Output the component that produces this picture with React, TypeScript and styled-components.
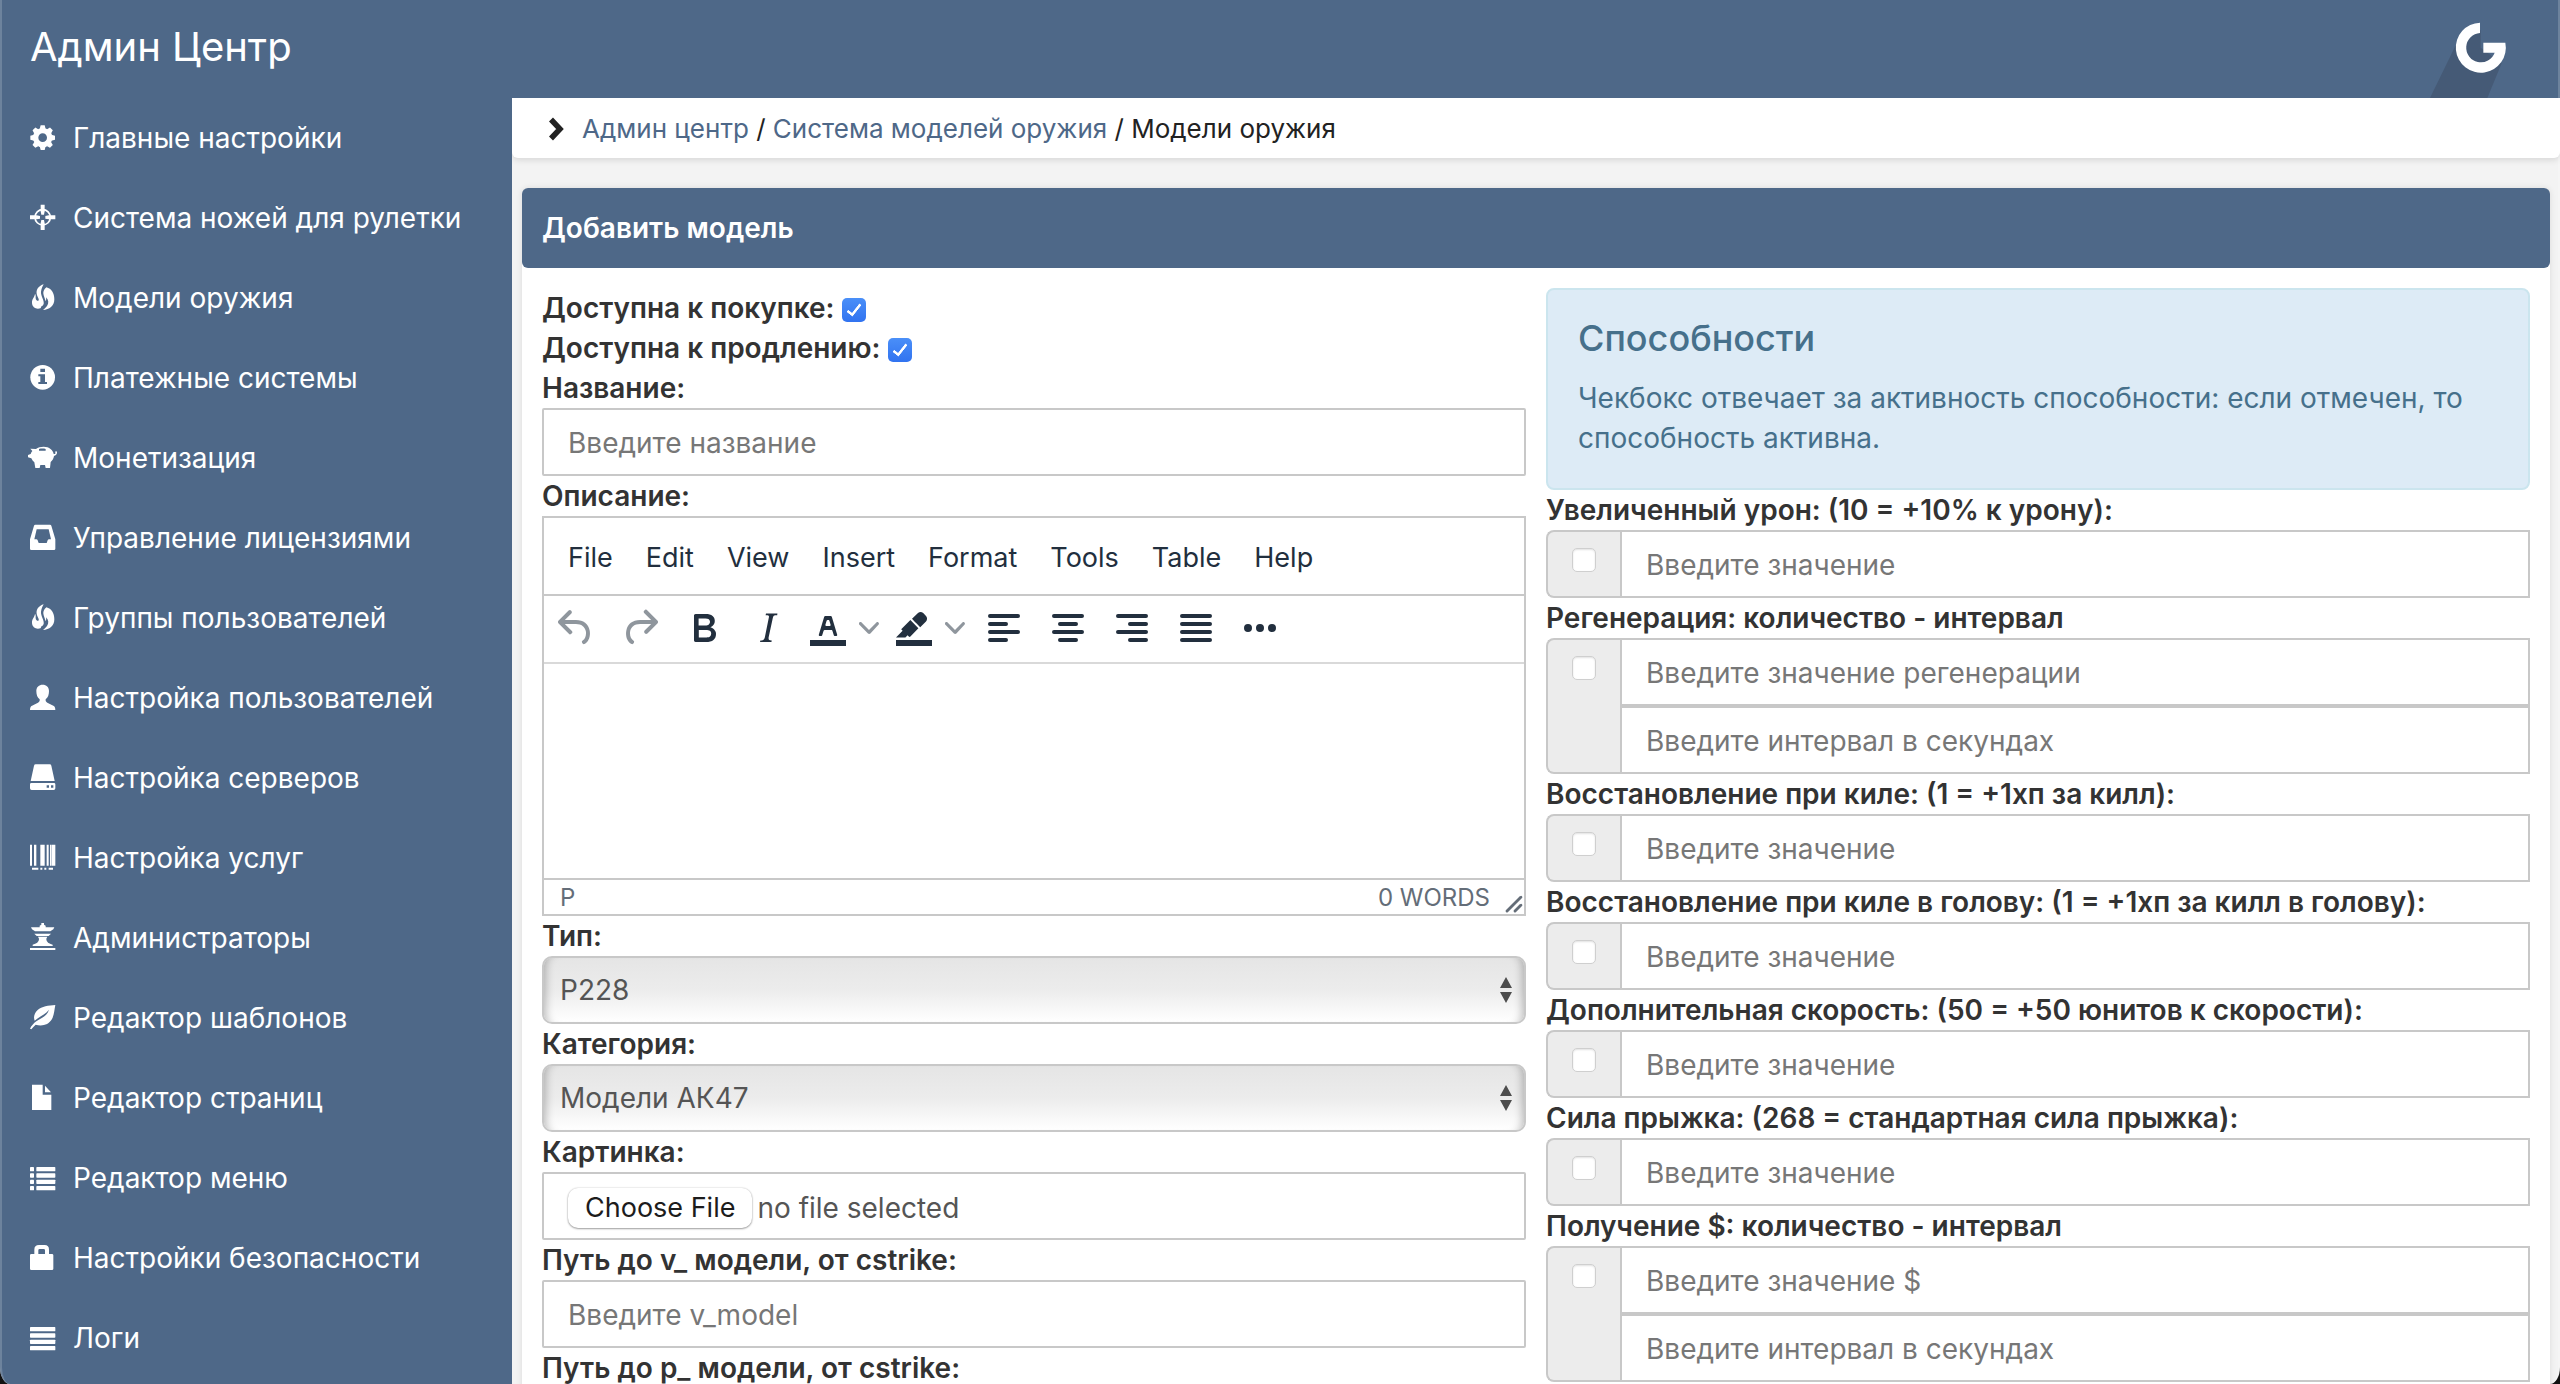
import React from "react";
import styled, { createGlobalStyle } from "styled-components";

const colors = {
  brand: "#4e6888",
  brandDark: "#455a76",
  text: "#333333",
  field: "#555555",
  muted: "#777777",
  border: "#c8c8c8",
  page: "#f3f3f3",
  editor: "#222f3e",
  info: "#46708b",
};

const GlobalStyle = createGlobalStyle`
  *, *::before, *::after { box-sizing: border-box; }
  html, body { margin: 0; height: 100%; background: #111111; }
  #root { height: 100%; }
  body, input, select, button {
    font-family: Inter, "Liberation Sans", sans-serif;
    font-size: 28px;
    line-height: 40px;
  }
`;

/* ---------- shell ---------- */

const Window = styled.div`
  position: relative;
  display: flex;
  flex-direction: column;
  height: 100vh;
  overflow: hidden;
  border-radius: 0 0 10px 10px / 0 0 17px 17px;
  background: ${colors.page};
  color: ${colors.text};

  &::after {
    content: "";
    position: absolute;
    inset: 0;
    border: solid rgba(255, 255, 255, 0.18);
    border-width: 0 2px;
    border-radius: inherit;
    pointer-events: none;
  }
`;

const Header = styled.header`
  flex: none;
  display: flex;
  align-items: stretch;
  justify-content: space-between;
  height: 98px;
  padding: 0 42px 0 30px;
  background: ${colors.brand};
`;

const Brand = styled.a`
  padding: 24px 0;
  color: #ffffff;
  font-size: 40px;
  line-height: 46px;
  text-decoration: none;
`;

const LogoLink = styled.a`
  display: block;

  svg {
    display: block;
    width: 90px;
    height: 98px;
  }
`;

const Columns = styled.div`
  flex: 1;
  min-height: 0;
  display: grid;
  grid-template-columns: 512px minmax(0, 1fr);
`;

const Sidebar = styled.nav`
  overflow: hidden;
  background: ${colors.brand};
`;

const SideLink = styled.a`
  display: flex;
  align-items: center;
  gap: 15px;
  height: 80px;
  padding-left: 30px;
  color: #ffffff;
  text-decoration: none;
  white-space: nowrap;

  svg {
    flex: none;
    width: 28px;
    height: 28px;
    overflow: visible;
    fill: currentColor;
  }
`;

const Main = styled.main`
  overflow-y: auto;
  scrollbar-width: none;
`;

const Breadcrumbs = styled.nav`
  display: flex;
  align-items: center;
  height: 60px;
  padding: 2px 0 0 34px;
  border-radius: 0 0 6px 6px;
  background: #ffffff;
  box-shadow: 0 2px 6px rgba(0, 0, 0, 0.12);
  color: #222222;
  font-size: 26px;
  white-space: pre;

  svg {
    width: 18px;
    height: 24px;
    margin-right: 18px;
  }

  a {
    color: ${colors.brand};
    text-decoration: none;
  }
`;

const Card = styled.section`
  margin: 30px 10px;
  border-radius: 6px;
  background: #ffffff;
  box-shadow: 0 0 6px rgba(0, 0, 0, 0.1);
`;

const CardTitle = styled.h1`
  margin: 0;
  padding: 20px;
  border-radius: 6px;
  background: ${colors.brand};
  color: #ffffff;
  font-size: 28px;
  font-weight: 600;
  line-height: 40px;
`;

const Form = styled.form`
  display: grid;
  grid-template-columns: repeat(2, minmax(0, 1fr));
  align-items: start;
  gap: 20px;
  padding: 20px;
`;

const Column = styled.div`
  display: flex;
  flex-direction: column;
`;

/* ---------- fields ---------- */

const Label = styled.label`
  display: block;
  font-weight: 600;
  line-height: 40px;
  white-space: nowrap;
`;

const Checkbox = styled.input.attrs({ type: "checkbox" })`
  appearance: none;
  flex: none;
  display: grid;
  place-items: center;
  width: 24px;
  height: 24px;
  margin: 0;
  border: 1px solid #cfcfcf;
  border-radius: 5px;
  background: #ffffff;
  box-shadow: inset 0 1px 2px rgba(0, 0, 0, 0.12);

  &:checked {
    border: 0;
    background: linear-gradient(#4a8ff8, #3173f0);
    box-shadow: none;
  }

  &:checked::after {
    content: "";
    width: 8px;
    height: 15px;
    margin-bottom: 4px;
    border: solid #ffffff;
    border-width: 0 3px 3px 0;
    border-radius: 1px;
    transform: rotate(38deg);
  }
`;

const CheckRow = styled.div`
  display: flex;
  align-items: flex-start;
  gap: 8px;
  height: 40px;

  ${Checkbox} {
    margin-top: 10px;
  }
`;

const TextInput = styled.input`
  display: block;
  width: 100%;
  height: 68px;
  padding: 2px 24px 0;
  border: 2px solid ${colors.border};
  border-radius: 2px;
  outline: 0;
  background: #ffffff;
  color: ${colors.field};

  &::placeholder {
    color: ${colors.muted};
    opacity: 1;
  }
`;

const SelectBox = styled.div`
  display: grid;
  align-items: center;

  & > * {
    grid-area: 1 / 1;
  }

  svg {
    justify-self: end;
    width: 14px;
    height: 28px;
    margin-right: 13px;
    fill: #4d4d4d;
    pointer-events: none;
  }
`;

const Select = styled.select`
  appearance: none;
  width: 100%;
  height: 68px;
  padding: 0 16px;
  border: 2px solid ${colors.border};
  border-radius: 10px;
  background: linear-gradient(#e5e5e5, #ececec 50%, #ffffff);
  box-shadow:
    inset 10px 0 8px -8px rgba(0, 0, 0, 0.25),
    inset -10px 0 8px -8px rgba(0, 0, 0, 0.25);
  color: ${colors.field};
`;

const FileBox = styled.div`
  position: relative;
  display: flex;
  align-items: center;
  gap: 5px;
  height: 68px;
  padding: 4px 24px 0;
  border: 2px solid ${colors.border};
  border-radius: 2px;
  color: ${colors.field};

  input {
    position: absolute;
    inset: 0;
    width: 100%;
    opacity: 0;
  }
`;

const FileButton = styled.span`
  padding: 0 17px;
  border-radius: 10px;
  background: #ffffff;
  box-shadow: 0 1px 2px rgba(0, 0, 0, 0.35), 0 0 2px rgba(0, 0, 0, 0.2);
  color: #1c1c1c;
  font-size: 27px;
`;

const FileStatus = styled.span`
  font-size: 28px;
`;

const Alert = styled.div`
  padding: 28px 30px 30px;
  border: 2px solid #cbe5ee;
  border-radius: 8px;
  background: #ddebf6;
  color: ${colors.info};

  h2 {
    margin: 0 0 20px;
    font-size: 36px;
    font-weight: 500;
    line-height: 40px;
  }

  p {
    margin: 0;
  }
`;

const Group = styled.div`
  display: flex;
`;

const Addon = styled.div`
  flex: none;
  display: flex;
  justify-content: center;
  width: 74px;
  padding-top: 16px;
  border: 2px solid ${colors.border};
  border-right: 0;
  border-radius: 8px 0 0 8px;
  background: #ececec;
`;

const GroupInputs = styled.div`
  flex: 1;
  min-width: 0;

  ${TextInput} {
    border-radius: 0;
  }
`;

/* ---------- rich text editor ---------- */

const Editor = styled.div`
  border: 2px solid ${colors.border};
  color: ${colors.editor};
`;

const MenuBar = styled.div`
  display: flex;
  align-items: center;
  gap: 1px;
  height: 78px;
  padding: 4px 8px 0;
  border-bottom: 2px solid ${colors.border};
`;

const MenuButton = styled.button`
  padding: 0 16px;
  border: 0;
  background: none;
  color: inherit;
  font-size: 27px;
`;

const ToolBar = styled.div`
  display: flex;
  align-items: center;
  height: 68px;
  border-bottom: 2px solid #d9d9d9;
`;

const ToolButton = styled.button<{ $width?: number; $dim?: boolean }>`
  display: grid;
  place-items: center;
  width: ${(p) => p.$width ?? 64}px;
  height: 66px;
  padding: 0 0 2px;
  border: 0;
  background: none;
  color: inherit;
  opacity: ${(p) => (p.$dim ? 0.5 : 1)};

  svg {
    width: 48px;
    height: 48px;
    fill: currentColor;
  }
`;

const SplitButton = styled.div`
  display: flex;
  padding-right: 4px;

  ${ToolButton}:last-child svg {
    width: 20px;
    height: 20px;
  }
`;

const EditArea = styled.div`
  height: 214px;
  outline: 0;
`;

const StatusBar = styled.div`
  display: flex;
  align-items: center;
  height: 36px;
  padding: 2px 0 0 16px;
  border-top: 2px solid ${colors.border};
  color: #646d78;
  font-size: 24px;
  line-height: 32px;

  svg {
    align-self: flex-end;
    width: 20px;
    height: 20px;
    margin-left: 14px;
    fill: currentColor;
  }
`;

const WordCount = styled.span`
  margin-left: auto;
`;

/* ---------- icons ---------- */

const Glyph = ({ children }: { children: React.ReactNode }) => (
  <svg viewBox="0 0 84 84" aria-hidden="true">
    {children}
  </svg>
);

const rows4 = [9, 28, 47, 66];

const Cog = () => (
  <Glyph>
    <circle cx="38" cy="41" r="21" fill="none" stroke="currentColor" strokeWidth="16" />
    {[0, 45, 90, 135, 180, 225, 270, 315].map((a) => (
      <path key={a} d="M29 15L32 4H44L47 15Z" transform={`rotate(${a} 38 41)`} />
    ))}
  </Glyph>
);

const Screenshot = () => (
  <Glyph>
    <circle cx="38" cy="40" r="23" fill="none" stroke="currentColor" strokeWidth="5" />
    {[0, 90, 180, 270].map((a) => (
      <path key={a} d="M32 2H44V22L42 32H34L32 22Z" transform={`rotate(${a} 38 40)`} />
    ))}
  </Glyph>
);

const Fire = () => (
  <Glyph>
    <path d="M41 1C27 5 18 16 20 29C22 39 28 44 26 49C24 53 17 49 17 42C17 37 18 33 15 29C15 38 5 44 6 57C7 71 20 78 33 72C31 66 38 68 41 60C44 50 32 36 33 24C34 14 37 8 41 1Z" />
    <path d="M49 10C41 17 38 25 41 34C43 41 45 45 47 52C49 48 49 44 48 40C56 48 57 58 51 66C47 71 43 75 39 78C58 77 73 67 73 46C73 28 65 14 49 10Z" />
  </Glyph>
);

const Info = () => (
  <Glyph>
    <circle cx="38" cy="40" r="37" />
    <path fill={colors.brand} d="M31 14H45V24H31ZM25 31H45V54H51V60H25V54H31V37H25Z" />
  </Glyph>
);

const Piggy = () => (
  <Glyph>
    <path
      fillRule="evenodd"
      d="M1 14L18 15C24 10 32 8 41 8C58 8 69 18 71 30C75 31 77 29 76 26C75 23 77 21 79 22C83 24 82 34 72 36C71 44 67 50 62 54L60 72H47L45 63H31L29 72H16L13 55C9 52 6 48 4 43L-6 40V33L2 30C3 26 5 23 7 21ZM27 15V20H47V15C41 13 33 13 27 15Z"
    />
  </Glyph>
);

const Inbox = () => (
  <Glyph>
    <path
      fillRule="evenodd"
      d="M16 2H60Q63 2 64 5L76 46V74Q76 78 72 78H4Q0 78 0 74V46L12 5Q13 2 16 2ZM20 16L13 46H19Q22 46 23 49L26 57H50L53 49Q54 46 57 46H63L56 16Z"
    />
  </Glyph>
);

const User = () => (
  <Glyph>
    <path d="M38 2C27 2 19 9 19 21C19 32 22 41 29 46C30 50 28 54 24 56L6 65C2 67 0 70 0 78H76C76 70 74 67 70 65L52 56C48 54 46 50 47 46C54 41 57 32 57 21C57 9 49 2 38 2Z" />
  </Glyph>
);

const Hdd = () => (
  <Glyph>
    <path d="M17 1H59Q63 1 64 5L74 51H2L12 5Q13 1 17 1Z" />
    <path
      fillRule="evenodd"
      d="M4 57H72Q76 57 76 61V73Q76 78 71 78H5Q0 78 0 73V61Q0 57 4 57ZM50 64V71H57V64ZM63 64V71H70V64Z"
    />
  </Glyph>
);

const Barcode = () => (
  <Glyph>
    <path d="M0 2H6V65H0ZM12 2H19V65H12ZM31 2H44V65H31ZM50 2H56V65H50ZM60 2H63V65H60ZM64 2H76V65H64Z" />
    <path d="M6 71H25V77H6ZM31 71H37V77H31ZM43 71H49V77H43ZM56 71H69V77H56Z" />
  </Glyph>
);

const Pagoda = () => (
  <Glyph>
    <path d="M34 -3H42V2L47 5V10H73L70 16L61 22H15L6 16L3 10H29V5L34 2Z" />
    <path d="M13 29H63L56 36H20Z" />
    <path d="M24 38H52L49 44C49 54 57 59 68 62V66H8V62C19 59 27 54 27 44Z" />
    <path d="M0 72H76V78H0Z" />
  </Glyph>
);

const Leaf = () => (
  <Glyph>
    <path d="M76 3C56 4 35 7 23 18C12 28 10 41 14 50C27 38 44 33 57 17C51 36 33 43 19 52C11 58 4 66 0 74L4 76C8 71 12 66 17 62C35 68 56 63 66 45C73 32 73 17 76 3Z" />
  </Glyph>
);

const FileIcon = () => (
  <Glyph>
    <path d="M6 2H38V32H64V78H6ZM45 5L63 25H45Z" />
  </Glyph>
);

const ListIcon = () => (
  <Glyph>
    {rows4.map((y) => (
      <React.Fragment key={y}>
        <rect x="0" y={y} width="12" height="13" rx="2" />
        <rect x="19" y={y} width="57" height="13" rx="2" />
      </React.Fragment>
    ))}
  </Glyph>
);

const Lock = () => (
  <Glyph>
    <path
      fillRule="evenodd"
      d="M4 30H13V17Q13 3 27 3H44Q57 3 57 17V30H66Q70 30 70 34V74Q70 78 66 78H4Q0 78 0 74V34Q0 30 4 30ZM25 30H45V19Q45 15 41 15H29Q25 15 25 19Z"
    />
  </Glyph>
);

const Justify = () => (
  <Glyph>
    {rows4.map((y) => (
      <rect key={y} x="0" y={y} width="76" height="13" rx="2" />
    ))}
  </Glyph>
);

const Logo = () => (
  <svg viewBox="684 0 270 294" aria-hidden="true">
    <path fill={colors.brandDark} d="M770 130L690 294H862L905 190L842 143L842 90Z" />
    <path
      fill="#ffffff"
      d="M840 68A75 75 0 1 0 916 128H850V158H884A44 44 0 1 1 840 99Z"
    />
  </svg>
);

const Tool = ({ d, size = 24 }: { d: string; size?: number }) => (
  <svg viewBox={`0 0 ${size} ${size}`} aria-hidden="true">
    <path fillRule="evenodd" d={d} />
  </svg>
);

const bar = (x: number, y: number, w: number) =>
  `M${x + 1} ${y}h${w - 2}a1 1 0 0 1 0 2h-${w - 2}a1 1 0 0 1 0-2z`;

const toolPaths = {
  undo: "M6.4 8H12c3.7 0 6.2 2 6.8 5.1.6 2.7-.4 5.6-2.3 6.8a1 1 0 0 1-1-1.8c1.1-.6 1.8-2.7 1.4-4.6-.5-2.1-2.1-3.5-4.9-3.5H6.4l3.3 3.3a1 1 0 1 1-1.4 1.4l-5-5a1 1 0 0 1 0-1.4l5-5a1 1 0 0 1 1.4 1.4L6.4 8z",
  redo: "M17.6 10H12c-2.8 0-4.4 1.4-4.9 3.5-.4 2 .3 4 1.4 4.6a1 1 0 1 1-1 1.8c-2-1.2-2.9-4.1-2.3-6.8.6-3 3-5.1 6.8-5.1h5.6l-3.3-3.3a1 1 0 1 1 1.4-1.4l5 5a1 1 0 0 1 0 1.4l-5 5a1 1 0 0 1-1.4-1.4l3.3-3.3z",
  bold: "M7.8 19c-.3 0-.5 0-.6-.2l-.2-.5V5.7c0-.2 0-.4.2-.5l.6-.2h5c1.5 0 2.7.3 3.5 1 .7.6 1.1 1.4 1.1 2.5a3 3 0 0 1-.6 1.9c-.4.6-1 1-1.6 1.2.4.1.9.3 1.3.6s.8.7 1 1.2c.4.4.5 1 .5 1.6 0 1.3-.4 2.3-1.3 3-.8.7-2.1 1-3.8 1H7.8zm5-8.3c.6 0 1.2-.1 1.6-.5.4-.3.6-.7.6-1.3 0-1.1-.8-1.7-2.3-1.7H9.3v3.5h3.4zm.5 6c.7 0 1.3-.1 1.7-.4.4-.4.6-.9.6-1.5s-.2-1-.7-1.4c-.4-.3-1-.4-2-.4H9.4v3.8h4z",
  italic:
    "M16.7 4.7l-.1.9h-.3c-.6 0-1 0-1.4.3-.3.3-.4.6-.5 1.1l-2.1 9.8v.6c0 .5.4.8 1.4.8h.2l-.2.8H8l.2-.8h.2c1.1 0 1.8-.5 2-1.5l2-9.8.1-.5c0-.6-.4-.8-1.4-.8h-.3l.2-.9h5.8z",
  color:
    "M3 18h18v3H3zM8.7 16h-.8a.5.5 0 0 1-.5-.6l2.7-9c.1-.3.3-.4.5-.4h2.8c.2 0 .4.1.5.4l2.7 9a.5.5 0 0 1-.5.6h-.8a.5.5 0 0 1-.4-.4l-.7-2.2c0-.3-.3-.4-.5-.4h-3.4c-.2 0-.4.1-.5.4l-.7 2.2c0 .3-.2.4-.4.4zm2.6-7.6l-.6 2a.5.5 0 0 0 .5.6h1.6a.5.5 0 0 0 .5-.6l-.6-2c0-.3-.3-.4-.5-.4h-.4c-.2 0-.4.1-.5.4z",
  highlight:
    "M3 18h18v3H3zM7.7 16.7H3l3.3-3.3-.7-.8L10.2 8l4 4.1-4 4.2c-.2.2-.6.2-.8 0l-.6-.7-1.1 1.1zm5-7.5L11 7.4l3-2.9a2 2 0 0 1 2.6 0L18 6c.7.7.7 2 0 2.7l-2.9 2.9-1.8-1.8-.5-.6z",
  left: bar(4, 5, 16) + bar(4, 9, 10) + bar(4, 13, 16) + bar(4, 17, 10),
  center: bar(4, 5, 16) + bar(7, 9, 10) + bar(4, 13, 16) + bar(7, 17, 10),
  right: bar(4, 5, 16) + bar(10, 9, 10) + bar(4, 13, 16) + bar(10, 17, 10),
  justify: bar(4, 5, 16) + bar(4, 9, 16) + bar(4, 13, 16) + bar(4, 17, 16),
  more: "M6 10a2 2 0 1 0 0 4 2 2 0 0 0 0-4zm6 0a2 2 0 1 0 0 4 2 2 0 0 0 0-4zm6 0a2 2 0 1 0 0 4 2 2 0 0 0 0-4z",
  chevron:
    "M8.7 2.2c.3-.3.8-.3 1 0 .4.4.4.9 0 1.2L5.7 7.8c-.3.3-.9.3-1.2 0L.2 3.4a.8.8 0 0 1 0-1.2c.3-.3.8-.3 1.1 0L5 6l3.7-3.8z",
  resize:
    "M8.1 1.1A.5.5 0 1 1 9 2l-7 7A.5.5 0 1 1 1 8l7-7zM8.1 5.1A.5.5 0 1 1 9 6l-3 3A.5.5 0 1 1 5 8l3-3z",
};

/* ---------- data ---------- */

const menu: [string, React.FC][] = [
  ["Главные настройки", Cog],
  ["Система ножей для рулетки", Screenshot],
  ["Модели оружия", Fire],
  ["Платежные системы", Info],
  ["Монетизация", Piggy],
  ["Управление лицензиями", Inbox],
  ["Группы пользователей", Fire],
  ["Настройка пользователей", User],
  ["Настройка серверов", Hdd],
  ["Настройка услуг", Barcode],
  ["Администраторы", Pagoda],
  ["Редактор шаблонов", Leaf],
  ["Редактор страниц", FileIcon],
  ["Редактор меню", ListIcon],
  ["Настройки безопасности", Lock],
  ["Логи", Justify],
];

const abilities: { id: string; label: string; fields: string[] }[] = [
  { id: "damage", label: "Увеличенный урон: (10 = +10% к урону):", fields: ["Введите значение"] },
  {
    id: "regen",
    label: "Регенерация: количество - интервал",
    fields: ["Введите значение регенерации", "Введите интервал в секундах"],
  },
  { id: "kill", label: "Восстановление при киле: (1 = +1хп за килл):", fields: ["Введите значение"] },
  {
    id: "head",
    label: "Восстановление при киле в голову: (1 = +1хп за килл в голову):",
    fields: ["Введите значение"],
  },
  {
    id: "speed",
    label: "Дополнительная скорость: (50 = +50 юнитов к скорости):",
    fields: ["Введите значение"],
  },
  { id: "jump", label: "Сила прыжка: (268 = стандартная сила прыжка):", fields: ["Введите значение"] },
  {
    id: "money",
    label: "Получение $: количество - интервал",
    fields: ["Введите значение $", "Введите интервал в секундах"],
  },
];

/* ---------- composed parts ---------- */

const CheckField = ({ id, label }: { id: string; label: string }) => (
  <CheckRow>
    <Label htmlFor={id}>{label}</Label>
    <Checkbox id={id} defaultChecked />
  </CheckRow>
);

const TextField = ({ id, label, placeholder }: { id: string; label: string; placeholder?: string }) => (
  <>
    <Label htmlFor={id}>{label}</Label>
    <TextInput id={id} placeholder={placeholder} />
  </>
);

const SelectField = ({ id, label, value }: { id: string; label: string; value: string }) => (
  <>
    <Label htmlFor={id}>{label}</Label>
    <SelectBox>
      <Select id={id}>
        <option>{value}</option>
      </Select>
      <svg viewBox="0 0 14 28" aria-hidden="true">
        <path d="M7 1L13 12H1ZM7 27L13 16H1Z" />
      </svg>
    </SelectBox>
  </>
);

const ColorTool = ({ d }: { d: string }) => (
  <SplitButton>
    <ToolButton type="button" $width={56}>
      <Tool d={d} />
    </ToolButton>
    <ToolButton type="button" $width={26} $dim>
      <Tool d={toolPaths.chevron} size={10} />
    </ToolButton>
  </SplitButton>
);

const RichText = () => (
  <Editor>
    <MenuBar>
      {["File", "Edit", "View", "Insert", "Format", "Tools", "Table", "Help"].map((m) => (
        <MenuButton key={m} type="button">
          {m}
        </MenuButton>
      ))}
    </MenuBar>
    <ToolBar>
      <ToolButton type="button" $dim>
        <Tool d={toolPaths.undo} />
      </ToolButton>
      <ToolButton type="button" $dim>
        <Tool d={toolPaths.redo} />
      </ToolButton>
      <ToolButton type="button">
        <Tool d={toolPaths.bold} />
      </ToolButton>
      <ToolButton type="button">
        <Tool d={toolPaths.italic} />
      </ToolButton>
      <ColorTool d={toolPaths.color} />
      <ColorTool d={toolPaths.highlight} />
      {[toolPaths.left, toolPaths.center, toolPaths.right, toolPaths.justify, toolPaths.more].map((d) => (
        <ToolButton key={d} type="button">
          <Tool d={d} />
        </ToolButton>
      ))}
    </ToolBar>
    <EditArea contentEditable suppressContentEditableWarning role="textbox" aria-labelledby="description" />
    <StatusBar>
      <span>P</span>
      <WordCount>0 WORDS</WordCount>
      <Tool d={toolPaths.resize} size={10} />
    </StatusBar>
  </Editor>
);

const Ability = ({ id, label, fields }: { id: string; label: string; fields: string[] }) => (
  <>
    <Label htmlFor={id}>{label}</Label>
    <Group>
      <Addon>
        <Checkbox id={id} />
      </Addon>
      <GroupInputs>
        {fields.map((f) => (
          <TextInput key={f} aria-label={f} placeholder={f} />
        ))}
      </GroupInputs>
    </Group>
  </>
);

export default function App() {
  return (
    <>
      <GlobalStyle />
      <Window>
        <Header>
          <Brand href="#">Админ Центр</Brand>
          <LogoLink href="#">
            <Logo />
          </LogoLink>
        </Header>
        <Columns>
          <Sidebar>
            {menu.map(([title, Icon]) => (
              <SideLink key={title} href="#">
                <Icon />
                {title}
              </SideLink>
            ))}
          </Sidebar>
          <Main>
            <Breadcrumbs>
              <svg viewBox="0 0 18 24" aria-hidden="true">
                <path d="M5 2.5L14 12L5 21.5" fill="none" stroke="#222222" strokeWidth="5.5" />
              </svg>
              <a href="#">Админ центр</a> / <a href="#">Система моделей оружия</a> / Модели оружия
            </Breadcrumbs>
            <Card>
              <CardTitle>Добавить модель</CardTitle>
              <Form>
                <Column>
                  <CheckField id="buy" label="Доступна к покупке:" />
                  <CheckField id="extend" label="Доступна к продлению:" />
                  <TextField id="name" label="Название:" placeholder="Введите название" />
                  <Label as="span" id="description">
                    Описание:
                  </Label>
                  <RichText />
                  <SelectField id="type" label="Тип:" value="P228" />
                  <SelectField id="category" label="Категория:" value="Модели АК47" />
                  <Label htmlFor="image">Картинка:</Label>
                  <FileBox>
                    <FileButton>Choose File</FileButton>
                    <FileStatus>no file selected</FileStatus>
                    <input id="image" type="file" />
                  </FileBox>
                  <TextField id="vmodel" label="Путь до v_ модели, от cstrike:" placeholder="Введите v_model" />
                  <TextField id="pmodel" label="Путь до p_ модели, от cstrike:" />
                </Column>
                <Column>
                  <Alert>
                    <h2>Способности</h2>
                    <p>Чекбокс отвечает за активность способности: если отмечен, то способность активна.</p>
                  </Alert>
                  {abilities.map((a) => (
                    <Ability key={a.id} {...a} />
                  ))}
                </Column>
              </Form>
            </Card>
          </Main>
        </Columns>
      </Window>
    </>
  );
}
